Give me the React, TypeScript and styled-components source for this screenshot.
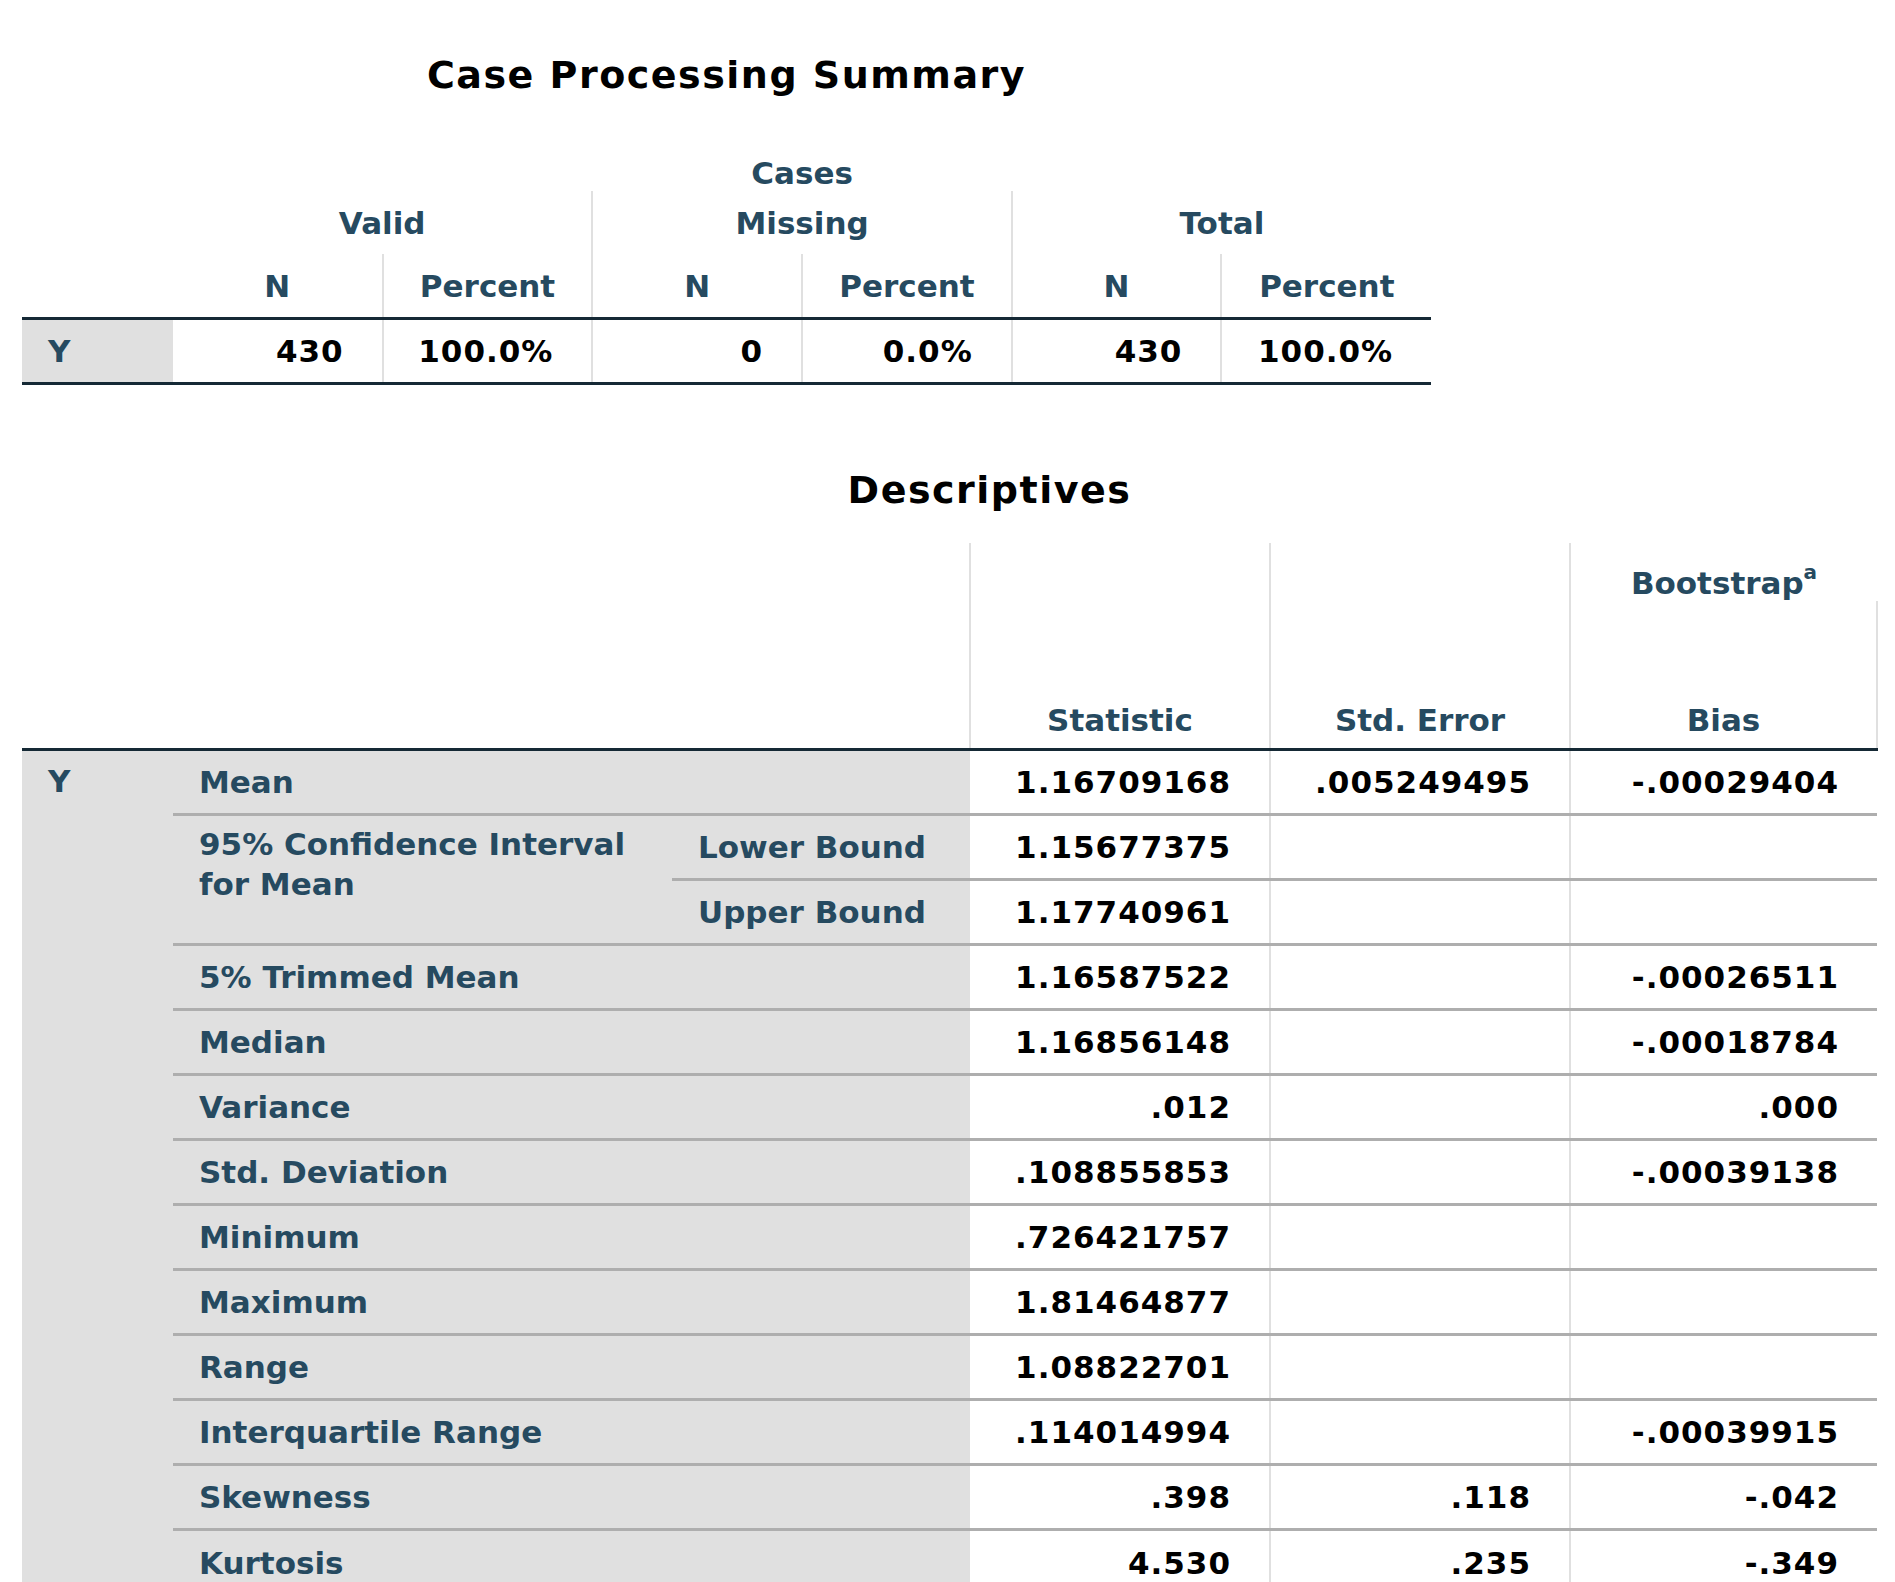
import React from 'react';
import styled, { createGlobalStyle } from 'styled-components';

const GlobalStyle = createGlobalStyle`
  body {
    margin: 0;
    background: #ffffff;
    font-family: "DejaVu Sans", "Liberation Sans", sans-serif;
  }
`;

const Page = styled.div`
  padding: 0 0 0 22px;
  width: 1873px;
  height: 1582px;
  overflow: hidden;
`;

const Title = styled.div<{ $width: number; $shift?: number }>`
  width: ${({ $width }) => $width}px;
  padding-left: ${({ $shift }) => $shift ?? 0}px;
  box-sizing: border-box;
  text-align: center;
  font-size: 38px;
  font-weight: bold;
  letter-spacing: 1.5px;
  color: #000;
  line-height: 50px;
`;

const Table = styled.table`
  border-collapse: collapse;
  table-layout: fixed;
  font-size: 31px;
  font-weight: bold;
`;

const Head = styled.th<{ $height: number; $vline?: boolean; $align?: string }>`
  height: ${({ $height }) => $height}px;
  padding: 0 10px;
  color: #264a60;
  font-weight: bold;
  text-align: center;
  vertical-align: ${({ $align }) => $align ?? 'middle'};
  border-left: ${({ $vline }) => ($vline ? '2px solid #e0e0e0' : 'none')};
  white-space: nowrap;
`;

const HeadRow = styled.tr<{ $bottom?: boolean }>`
  border-bottom: ${({ $bottom }) => ($bottom ? '3px solid #152935' : 'none')};
`;

const Stub = styled.td<{ $line?: boolean }>`
  background: #e0e0e0;
  color: #264a60;
  padding: 0 10px 0 26px;
  vertical-align: middle;
  white-space: nowrap;
  border-top: ${({ $line }) => ($line ? '3px solid #aeaeae' : 'none')};
`;

const TopStub = styled(Stub)`
  vertical-align: top;
  padding-top: 8px;
  line-height: 40px;
  white-space: normal;
`;

const Cell = styled.td<{ $line?: boolean; $first?: boolean }>`
  padding: 0 38px 0 10px;
  text-align: right;
  color: #000;
  letter-spacing: 1px;
  white-space: nowrap;
  vertical-align: middle;
  border-left: ${({ $first }) => ($first ? 'none' : '2px solid #e0e0e0')};
  border-top: ${({ $line }) => ($line ? '3px solid #aeaeae' : 'none')};
`;

const DataRow = styled.tr<{ $height: number; $bottom?: boolean }>`
  height: ${({ $height }) => $height}px;
  border-bottom: ${({ $bottom }) => ($bottom ? '3px solid #152935' : 'none')};
`;

const Sup = styled.sup`
  font-size: 20px;
  position: relative;
  top: -4px;
`;

const Gap = styled.div<{ $h: number }>`
  height: ${({ $h }) => $h}px;
`;

type Row = { label: string; stat: string; se?: string; bias?: string };

const ROWS: Row[] = [
  { label: '5% Trimmed Mean', stat: '1.16587522', bias: '-.00026511' },
  { label: 'Median', stat: '1.16856148', bias: '-.00018784' },
  { label: 'Variance', stat: '.012', bias: '.000' },
  { label: 'Std. Deviation', stat: '.108855853', bias: '-.00039138' },
  { label: 'Minimum', stat: '.726421757' },
  { label: 'Maximum', stat: '1.81464877' },
  { label: 'Range', stat: '1.08822701' },
  { label: 'Interquartile Range', stat: '.114014994', bias: '-.00039915' },
  { label: 'Skewness', stat: '.398', se: '.118', bias: '-.042' },
  { label: 'Kurtosis', stat: '4.530', se: '.235', bias: '-.349' },
];

const CaseSummary = () => (
  <Table style={{ width: 1409 }}>
    <colgroup>
      <col style={{ width: 151 }} />
      {[0, 1, 2, 3, 4, 5].map((i) => (
        <col key={i} style={{ width: 209.7 }} />
      ))}
    </colgroup>
    <tbody>
      <HeadRow>
        <Head $height={56} />
        <Head $height={56} colSpan={6} $align="bottom">Cases</Head>
      </HeadRow>
      <HeadRow>
        <Head $height={63} />
        <Head $height={63} colSpan={2}>Valid</Head>
        <Head $height={63} colSpan={2} $vline>Missing</Head>
        <Head $height={63} colSpan={2} $vline>Total</Head>
      </HeadRow>
      <HeadRow $bottom>
        <Head $height={63} />
        {['N', 'Percent', 'N', 'Percent', 'N', 'Percent'].map((t, i) => (
          <Head key={i} $height={63} $vline={i > 0}>{t}</Head>
        ))}
      </HeadRow>
      <DataRow $height={65} $bottom>
        <Stub>Y</Stub>
        {['430', '100.0%', '0', '0.0%', '430', '100.0%'].map((t, i) => (
          <Cell key={i} $first={i === 0}>{t}</Cell>
        ))}
      </DataRow>
    </tbody>
  </Table>
);

const Descriptives = () => (
  <Table style={{ width: 1855 }}>
    <colgroup>
      <col style={{ width: 151 }} />
      <col style={{ width: 499 }} />
      <col style={{ width: 298 }} />
      <col style={{ width: 300 }} />
      <col style={{ width: 300 }} />
      <col style={{ width: 307 }} />
    </colgroup>
    <tbody>
      <HeadRow>
        <Head $height={58} colSpan={3} />
        <Head $height={58} $vline />
        <Head $height={58} $vline />
        <Head $height={58} $vline $align="bottom">
          Bootstrap<Sup>a</Sup>
        </Head>
      </HeadRow>
      <HeadRow $bottom>
        <Head $height={137} colSpan={3} />
        <Head $height={137} $vline $align="bottom" style={{ paddingBottom: 10 }}>Statistic</Head>
        <Head $height={137} $vline $align="bottom" style={{ paddingBottom: 10 }}>Std. Error</Head>
        <Head
          $height={137}
          $vline
          $align="bottom"
          style={{ paddingBottom: 10, borderRight: '2px solid #e0e0e0' }}
        >
          Bias
        </Head>
      </HeadRow>
      <DataRow $height={65}>
        <Stub rowSpan={13} style={{ verticalAlign: 'top', paddingTop: 12 }}>Y</Stub>
        <Stub colSpan={2}>Mean</Stub>
        <Cell $first>1.16709168</Cell>
        <Cell>.005249495</Cell>
        <Cell>-.00029404</Cell>
      </DataRow>
      <DataRow $height={65}>
        <TopStub rowSpan={2} $line>95% Confidence Interval for Mean</TopStub>
        <Stub $line>Lower Bound</Stub>
        <Cell $first $line>1.15677375</Cell>
        <Cell $line />
        <Cell $line />
      </DataRow>
      <DataRow $height={65}>
        <Stub $line>Upper Bound</Stub>
        <Cell $first $line>1.17740961</Cell>
        <Cell $line />
        <Cell $line />
      </DataRow>
      {ROWS.map((r) => (
        <DataRow key={r.label} $height={65}>
          <Stub colSpan={2} $line>{r.label}</Stub>
          <Cell $first $line>{r.stat}</Cell>
          <Cell $line>{r.se}</Cell>
          <Cell $line>{r.bias}</Cell>
        </DataRow>
      ))}
    </tbody>
  </Table>
);

export default function App() {
  return (
    <>
      <GlobalStyle />
      <Page>
        <Gap $h={50} />
        <Title $width={1409}>Case Processing Summary</Title>
        <Gap $h={35} />
        <CaseSummary />
        <Gap $h={80} />
        <Title $width={1855} $shift={80}>Descriptives</Title>
        <Gap $h={28} />
        <Descriptives />
      </Page>
    </>
  );
}
